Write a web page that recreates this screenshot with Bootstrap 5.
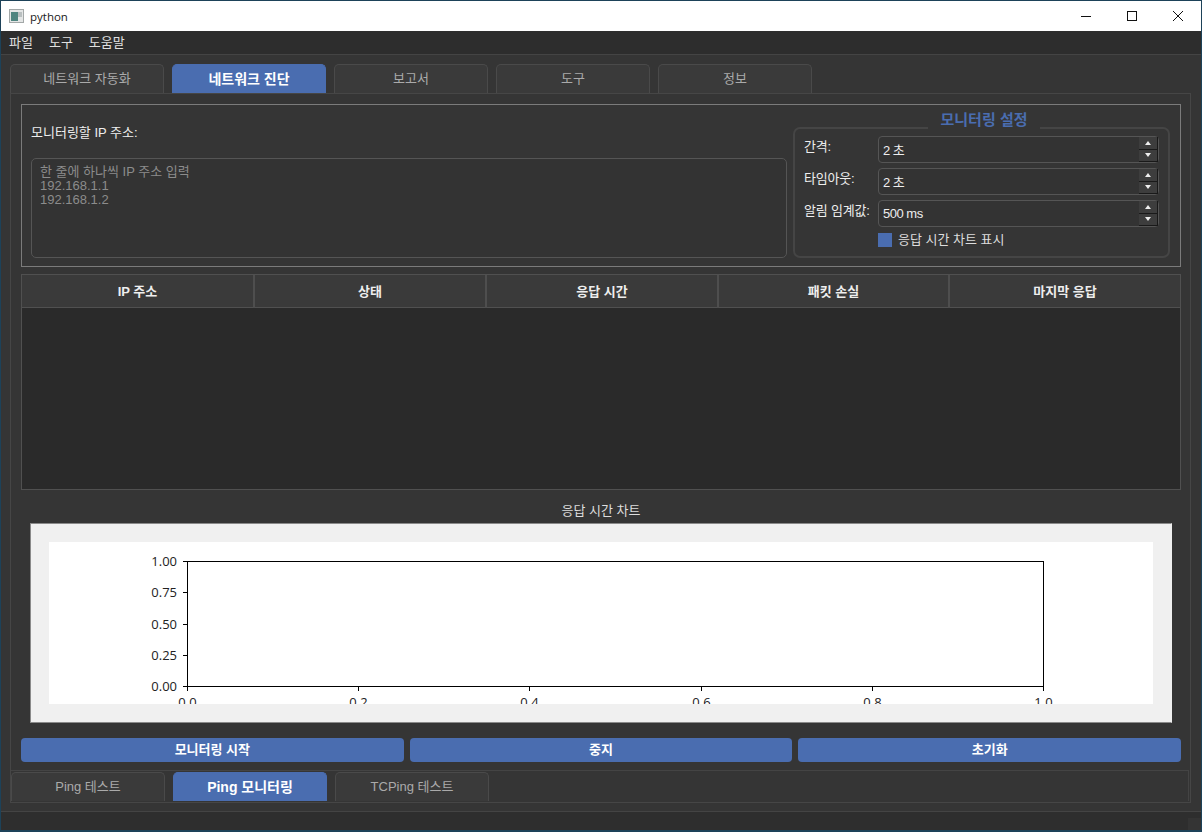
<!DOCTYPE html>
<html lang="ko">
<head>
  <meta charset="UTF-8">
  <meta name="viewport" content="width=device-width, initial-scale=1">
  <title>python</title>
  <link href="https://cdn.jsdelivr.net/npm/bootstrap@5.3.2/dist/css/bootstrap.min.css" rel="stylesheet">
  <style>
    html, body { height: 100%; }
    body { background: #353535; color: #e6e6e6; overflow: hidden; font: 13px/14px "Liberation Sans", "Noto Sans CJK KR", sans-serif; }
    .app { height: 832px; border: solid #1d4259; border-width: 1px 1px 2px 1px; }

    .titlebar { height: 30px; background: #fff; color: #1a1a1a; font: 11.5px "Open Sans", "Noto Sans CJK KR", sans-serif; padding-left: 8px; }
    .titlebar .app-icon { margin-right: 6px; }
    .titlebar .win-btn { width: 46px; height: 30px; }
    .menubar { height: 24px; background: #2d2d2d; border-bottom: 1px solid #444; padding-left: 8px; gap: 16px; color: #e0e0e0; }

    .main { flex: 1; padding: 9px 10px 9px 9px; border-bottom: 1px solid #444; min-height: 0; }
    .app-tabs { border: 0; gap: 8px; flex-wrap: nowrap; }
    .app-tabs .nav-link { width: 154px; height: 29px; padding: 0; margin: 0; display: flex; align-items: center; justify-content: center; background: #3a3a3a; color: #aaa; border: 1px solid #4a4a4a; border-bottom: 0; border-radius: 5px 5px 0 0; }
    .app-tabs .nav-link.active { background: #4a6db0; border-color: #4a6db0; color: #fff; font-weight: 700; font-size: 14px; }
    .panel { border: 1px solid #464646; height: 710px; }
    .pane { padding: 10px 9px 8px 10px; }

    .ip-group { height: 163px; border: 1px solid #7b7b7b; padding: 0 10px 0 9px; gap: 6px; }
    .ip-col { width: 756px; padding-top: 21px; flex-shrink: 0; }
    .ip-col label { margin-bottom: 18px; color: #eee; }
    .ip-input { height: 100px; padding: 6px 8px; font-size: 13px; line-height: 14px; resize: none; background: #333; border: 1px solid #555; border-radius: 5px; color: #ddd; }
    .ip-input::placeholder { color: #8c8c8c; opacity: 1; }

    .settings { width: 377px; height: 131px; margin-top: 22px; border: 2px solid #454545; border-radius: 7px; padding: 7px 9px 0 9px; position: relative; flex-shrink: 0; }
    .settings-title { position: absolute; top: -16px; left: 133px; width: 112px; height: 17px; background: #353535; color: #4a6db0; font-size: 15px; font-weight: 700; text-align: center; }
    .spin-row { height: 27px; margin-bottom: 5px; }
    .spin-row label { width: 74px; padding-bottom: 6px; color: #eee; white-space: nowrap; font-size: 13px; letter-spacing: -.2px; flex-shrink: 0; }
    .spin { flex: 1; height: 27px; border: 1px solid #555; border-radius: 4px; background: #333; }
    .spin input { background: transparent; border: 0; color: #eee; padding: 0 4px; font-size: 13px; letter-spacing: -.5px; height: 25px; border-radius: 4px; }
    .spin-btns { width: 19px; margin: 0; }
    .spin-btns span { flex: 1; background: #3d3d3d; border-right: 1px solid #191919; border-bottom: 1px solid #191919; }
    .spin-btns span::after { content: ""; border: 3px solid transparent; }
    .spin-btns .up::after { border-bottom: 4px solid #eee; border-top: 0; }
    .spin-btns .down::after { border-top: 4px solid #eee; border-bottom: 0; }
    .chart-check { margin: 0 0 0 74px; padding: 0; min-height: 0; height: 15px; gap: 6px; color: #ddd; }
    .chart-check .form-check-input { float: none; margin: 0; width: 14px; height: 14px; border: 0; border-radius: 0; background: #4a6db0; }

    .result-wrap { height: 216px; margin-top: 7px; background: #2a2a2a; border: 1px solid #505050; }
    .result-table { table-layout: fixed; --bs-table-bg: #3a3a3a; --bs-table-color: #eee; margin: 0; }
    .result-table th { height: 32px; padding: 3px 0 0; vertical-align: middle; text-align: center; font-size: 13px; background: #3a3a3a; color: #eee; border: 0; border-right: 2px solid #4e4e4e; border-bottom: 1px solid #505050; }
    .result-table th:nth-child(-n+3) { width: 232px; }
    .result-table th:last-child { border-right: 0; }

    .chart-label { height: 33px; padding-top: 14px; color: #ddd; text-align: center; }
    .chart-frame { height: 200px; margin: 0 9px; padding: 18px 18px 0 18px; background: #f0f0f0; border: 1px solid #8a8a8a; border-right-color: #f0f0f0; }
    .chart-frame svg { display: block; background: #fff; }
    .chart-frame text { font: 13px "Open Sans", sans-serif; fill: #222; }
    .chart-frame line, .chart-frame rect { stroke: #000; stroke-width: 1; fill: none; shape-rendering: crispEdges; }

    .actions { gap: 6px; margin-top: 15px; }
    .actions .btn { flex: 1; height: 24px; padding: 0; background: #4a6db0; border: 0; border-radius: 4px; color: #fff; font-size: 13px; font-weight: 700; line-height: 24px; }

    .subtabs { height: 31px; border-top: 1px solid #444; border-right: 1px solid #444; margin-right: 1px; padding-top: 1px; }
    .status { height: 18px; background: #2e2e2e; }
    .status .grip { width: 13px; height: 12px; background: #343434; }
  </style>
</head>
<body>
  <div class="app d-flex flex-column">
    <div class="titlebar d-flex align-items-center">
      <svg class="app-icon" width="15" height="14" viewBox="0 0 15 14">
        <rect x="0.5" y="0.5" width="14" height="13" fill="#e4e6e6" stroke="#a3a8a8"/>
        <rect x="2" y="3" width="7" height="9" fill="#4f8580"/>
        <rect x="9" y="3" width="4" height="5" fill="#b9bfc0"/>
      </svg>
      <span>python</span>
      <div class="ms-auto d-flex">
        <div class="win-btn d-flex align-items-center justify-content-center">
          <svg width="12" height="12" viewBox="0 0 12 12"><path d="M1 6.5h10" stroke="#111" fill="none"/></svg>
        </div>
        <div class="win-btn d-flex align-items-center justify-content-center">
          <svg width="12" height="12" viewBox="0 0 12 12"><rect x="1.5" y="1.5" width="9" height="9" stroke="#111" fill="none"/></svg>
        </div>
        <div class="win-btn d-flex align-items-center justify-content-center">
          <svg width="12" height="12" viewBox="0 0 12 12"><path d="M1 1l10 10M11 1L1 11" stroke="#111" fill="none"/></svg>
        </div>
      </div>
    </div>

    <div class="menubar d-flex align-items-center">
      <span>파일</span>
      <span>도구</span>
      <span>도움말</span>
    </div>

    <div class="main">
      <ul class="nav nav-tabs app-tabs">
        <li class="nav-item"><a class="nav-link" href="#">네트워크 자동화</a></li>
        <li class="nav-item"><a class="nav-link active" href="#">네트워크 진단</a></li>
        <li class="nav-item"><a class="nav-link" href="#">보고서</a></li>
        <li class="nav-item"><a class="nav-link" href="#">도구</a></li>
        <li class="nav-item"><a class="nav-link" href="#">정보</a></li>
      </ul>

      <div class="panel">
        <div class="pane">
          <div class="ip-group d-flex">
            <div class="ip-col d-flex flex-column">
              <label for="ips">모니터링할 IP 주소:</label>
              <textarea id="ips" class="form-control ip-input" placeholder="한 줄에 하나씩 IP 주소 입력&#10;192.168.1.1&#10;192.168.1.2"></textarea>
            </div>
            <div class="settings">
              <div class="settings-title">모니터링 설정</div>
              <div class="spin-row d-flex align-items-center">
                <label>간격:</label>
                <div class="spin d-flex">
                  <input class="form-control" value="2 초">
                  <div class="spin-btns d-flex flex-column flex-shrink-0"><span class="up d-flex align-items-center justify-content-center"></span><span class="down d-flex align-items-center justify-content-center"></span></div>
                </div>
              </div>
              <div class="spin-row d-flex align-items-center">
                <label>타임아웃:</label>
                <div class="spin d-flex">
                  <input class="form-control" value="2 초">
                  <div class="spin-btns d-flex flex-column flex-shrink-0"><span class="up d-flex align-items-center justify-content-center"></span><span class="down d-flex align-items-center justify-content-center"></span></div>
                </div>
              </div>
              <div class="spin-row d-flex align-items-center">
                <label>알림 임계값:</label>
                <div class="spin d-flex">
                  <input class="form-control" value="500 ms">
                  <div class="spin-btns d-flex flex-column flex-shrink-0"><span class="up d-flex align-items-center justify-content-center"></span><span class="down d-flex align-items-center justify-content-center"></span></div>
                </div>
              </div>
              <div class="form-check chart-check d-flex align-items-center">
                <input class="form-check-input" type="checkbox" id="showChart" checked>
                <label class="form-check-label" for="showChart">응답 시간 차트 표시</label>
              </div>
            </div>
          </div>

          <div class="result-wrap">
            <table class="table result-table">
              <thead>
                <tr>
                  <th>IP 주소</th>
                  <th>상태</th>
                  <th>응답 시간</th>
                  <th>패킷 손실</th>
                  <th>마지막 응답</th>
                </tr>
              </thead>
            </table>
          </div>

          <div class="chart-label">응답 시간 차트</div>
          <div class="chart-frame">
            <svg width="1104" height="162" viewBox="0 0 1104 162">
              <rect x="138.5" y="19.5" width="856" height="125"/>
              <line x1="134" y1="19.5" x2="138" y2="19.5"/>
              <line x1="134" y1="50.5" x2="138" y2="50.5"/>
              <line x1="134" y1="82.5" x2="138" y2="82.5"/>
              <line x1="134" y1="113.5" x2="138" y2="113.5"/>
              <line x1="134" y1="144.5" x2="138" y2="144.5"/>
              <line x1="138.5" y1="145" x2="138.5" y2="149"/>
              <line x1="309.5" y1="145" x2="309.5" y2="149"/>
              <line x1="480.5" y1="145" x2="480.5" y2="149"/>
              <line x1="652.5" y1="145" x2="652.5" y2="149"/>
              <line x1="823.5" y1="145" x2="823.5" y2="149"/>
              <line x1="994.5" y1="145" x2="994.5" y2="149"/>
              <text x="128" y="24" text-anchor="end">1.00</text>
              <text x="128" y="55" text-anchor="end">0.75</text>
              <text x="128" y="87" text-anchor="end">0.50</text>
              <text x="128" y="118" text-anchor="end">0.25</text>
              <text x="128" y="149" text-anchor="end">0.00</text>
              <text x="138.5" y="164.5" text-anchor="middle">0.0</text>
              <text x="309.5" y="164.5" text-anchor="middle">0.2</text>
              <text x="480.5" y="164.5" text-anchor="middle">0.4</text>
              <text x="652.5" y="164.5" text-anchor="middle">0.6</text>
              <text x="823.5" y="164.5" text-anchor="middle">0.8</text>
              <text x="994.5" y="164.5" text-anchor="middle">1.0</text>
            </svg>
          </div>

          <div class="actions d-flex">
            <button class="btn">모니터링 시작</button>
            <button class="btn">중지</button>
            <button class="btn">초기화</button>
          </div>
        </div>

        <div class="subtabs">
          <ul class="nav nav-tabs app-tabs">
            <li class="nav-item"><a class="nav-link" href="#">Ping 테스트</a></li>
            <li class="nav-item"><a class="nav-link active" href="#">Ping 모니터링</a></li>
            <li class="nav-item"><a class="nav-link" href="#">TCPing 테스트</a></li>
          </ul>
        </div>
      </div>
    </div>

    <div class="status d-flex justify-content-end align-items-end">
      <div class="grip"></div>
    </div>
  </div>
  <script src="https://cdn.jsdelivr.net/npm/bootstrap@5.3.2/dist/js/bootstrap.bundle.min.js"></script>
</body>
</html>
